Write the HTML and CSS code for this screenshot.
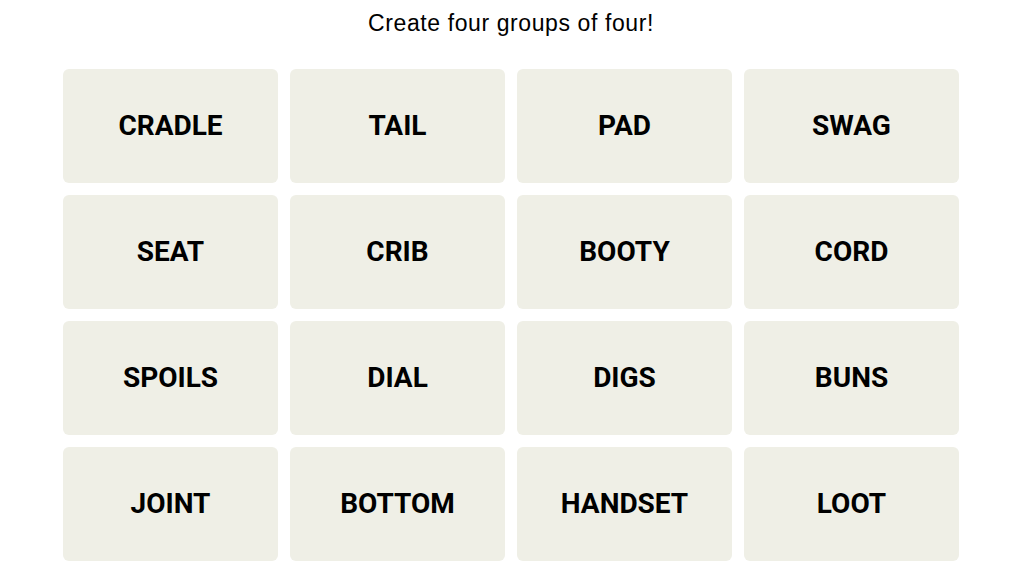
FILE: index.html
```html
<!DOCTYPE html>
<html lang="en">
<head>
<meta charset="utf-8">
<title>Connections</title>
<link rel="stylesheet" href="styles.css">
</head>
<body>
<main class="game">
  <h1 class="prompt">Create four groups of four!</h1>
  <div class="board">
    <button class="tile">CRADLE</button>
    <button class="tile">TAIL</button>
    <button class="tile">PAD</button>
    <button class="tile">SWAG</button>
    <button class="tile">SEAT</button>
    <button class="tile">CRIB</button>
    <button class="tile">BOOTY</button>
    <button class="tile">CORD</button>
    <button class="tile">SPOILS</button>
    <button class="tile">DIAL</button>
    <button class="tile">DIGS</button>
    <button class="tile">BUNS</button>
    <button class="tile">JOINT</button>
    <button class="tile">BOTTOM</button>
    <button class="tile">HANDSET</button>
    <button class="tile">LOOT</button>
  </div>
</main>
</body>
</html>
```
FILE: styles.css
```css
html, body {
  margin: 0;
  padding: 0;
  background: #ffffff;
}
.game {
  display: flex;
  flex-direction: column;
  align-items: center;
  padding-top: 8px;
  padding-right: 2px;
}
.prompt {
  margin: 0;
  font-family: "Liberation Sans", Roboto, sans-serif;
  font-weight: 400;
  font-size: 23px;
  letter-spacing: 0.6px;
  line-height: 30px;
  color: #000000;
}
.board {
  margin-top: 31px;
  display: grid;
  grid-template-columns: repeat(4, 215px);
  grid-auto-rows: 114px;
  gap: 12px;
}
.tile {
  border: 0;
  margin: 0;
  padding: 0;
  border-radius: 6px;
  background: #efefe6;
  color: #000000;
  font-family: Roboto, "Liberation Sans", sans-serif;
  font-weight: 700;
  font-size: 28px;
  display: flex;
  align-items: center;
  justify-content: center;
  padding-bottom: 2px;
}
```
